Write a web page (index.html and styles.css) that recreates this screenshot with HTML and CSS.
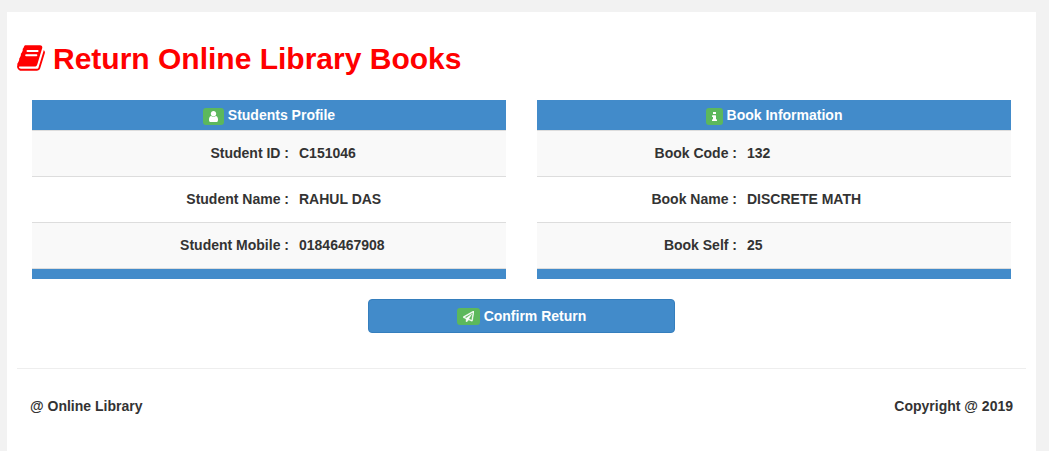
FILE: index.html
```html
<!DOCTYPE html>
<html lang="en">
<head>
<meta charset="utf-8">
<meta name="viewport" content="width=device-width, initial-scale=1">
<title>Return Online Library Books</title>
<link rel="stylesheet" href="styles.css">
</head>
<body>
<div class="page">
  <h1 class="title">
    <svg class="title-icon" viewBox="0 60 1664 1792" aria-hidden="true"><path d="M1639 478q40 57 18 129l-275 906q-19 64-76.500 107.500T1183 1664H260q-77 0-148.500-53.500T12 1479q-24-67-2-127 0-4 3-27t4-37q1-8-3-21.500t-3-19.500q2-11 8-21t16.500-23.500T52 1179q23-38 45-91.500t30-91.500q3-10 .5-30t-.5-28q3-11 17-28t17-23q21-36 42-92t25-90q1-9-2.500-32t.5-28q4-13 22-30.500t22-22.500q19-26 42.500-84.500T340 411q1-8-3-25.500t-2-26.500q2-8 9-18t18-23 17-21q8-12 16.500-30.500t15-35 16-36 19.500-32 26.500-23.500 36-11.500T556 134l-1 3q38-9 51-9h761q74 0 114 56t18 130l-274 906q-36 119-71.500 153.500T1025 1408H156q-27 0-38 15-11 16-1 43 24 70 144 70h923q29 0 56-15.500t35-41.500l300-987q7-22 5-57 38 15 59 43z"/><path class="slot" d="M620 480h610M540 730h615"/></svg>
    <span>Return Online Library Books</span>
  </h1>

  <main>
    <div class="tables">
      <table class="info student">
        <thead><tr><th colspan="2" scope="colgroup"><span class="head"><span class="badge"><svg class="icon-user" viewBox="0 0 1280 1536" preserveAspectRatio="none" aria-hidden="true"><path d="M1280 1271q0 109-62.500 187t-150.500 78H213q-88 0-150.500-78T0 1271q0-85 8.500-160.500t31.500-152 58.500-131 94-89T327 704q131 128 313 128t313-128q76 0 134.500 34.500t94 89 58.500 131 31.500 152 8.500 160.500zM1024 384q0 159-112.500 271.500T640 768 368.500 655.500 256 384t112.500-271.500T640 0t271.500 112.500T1024 384z"/></svg></span>Students Profile</span></th></tr></thead>
        <tbody>
          <tr><th scope="row">Student ID :</th><td>C151046</td></tr>
          <tr><th scope="row">Student Name :</th><td>RAHUL DAS</td></tr>
          <tr><th scope="row">Student Mobile :</th><td>01846467908</td></tr>
        </tbody>
        <tfoot><tr><td colspan="2"></td></tr></tfoot>
      </table>

      <table class="info book">
        <thead><tr><th colspan="2" scope="colgroup"><span class="head"><span class="badge"><svg class="icon-info" viewBox="0 0 640 1408" preserveAspectRatio="none" aria-hidden="true"><path d="M640 1216v128q0 26-19 45t-45 19H64q-26 0-45-19t-19-45v-128q0-26 19-45t45-19h64V768H64q-26 0-45-19t-19-45V576q0-26 19-45t45-19h384q26 0 45 19t19 45v576h64q26 0 45 19t19 45zM512 64v192q0 26-19 45t-45 19H192q-26 0-45-19t-19-45V64q0-26 19-45t45-19h256q26 0 45 19t19 45z"/></svg></span>Book Information</span></th></tr></thead>
        <tbody>
          <tr><th scope="row">Book Code :</th><td>132</td></tr>
          <tr><th scope="row">Book Name :</th><td>DISCRETE MATH</td></tr>
          <tr><th scope="row">Book Self :</th><td>25</td></tr>
        </tbody>
        <tfoot><tr><td colspan="2"></td></tr></tfoot>
      </table>
    </div>

    <button class="confirm" type="button"><span class="badge"><svg class="icon-plane" viewBox="0 0 1792 1792" aria-hidden="true"><path fill-rule="evenodd" d="M1764 11q33 24 27 64l-256 1536q-5 29-32 45-14 8-31 8-11 0-24-5l-527-215-298 327q-18 21-47 21-14 0-23-4-19-7-30-23.500t-11-36.500v-452L40 1060q-37-14-40-55-3-39 32-59L1696 10q35-21 68 1zM1422 1508l221-1323-1434 827 336 137 863-639-478 797z"/></svg></span>Confirm Return</button>
  </main>

  <footer class="footer">
    <span>@ Online Library</span>
    <span>Copyright @ 2019</span>
  </footer>
</div>
</body>
</html>
```

FILE: styles.css
```css
* {
  box-sizing: border-box;
}

body {
  min-height: 100vh;
  margin: 0;
  padding: 12px 13px 0 7px;
  display: flex;
  background: #f2f2f2;
  color: #333;
  font: bold 14px/20px "Liberation Sans", Arial, sans-serif;
}

svg {
  display: block;
  fill: currentColor;
}

.page {
  flex: 1;
  padding: 30px 10px 0;
  background: #fff;
}

.title {
  display: flex;
  align-items: center;
  gap: 8px;
  margin: 0 0 25px;
  color: #f00;
  font-size: 30px;
  line-height: 33px;
}

.title-icon {
  width: 28px;
  height: 30px;
}

.slot {
  stroke: #fff;
  stroke-width: 110;
  stroke-linecap: round;
}

.tables {
  display: grid;
  grid-template-columns: 1fr 1fr;
  gap: 31px;
  padding: 0 15px;
}

.info {
  width: 100%;
  border-collapse: separate;
  border-spacing: 0;
}

.info th,
.info td {
  padding: 0 5px;
  font-weight: bold;
}

.info thead th {
  height: 30px;
  background: #428bca;
  color: #fff;
}

.head {
  display: flex;
  align-items: center;
  justify-content: center;
  gap: 4px;
}

.badge {
  display: flex;
  align-items: center;
  height: 17px;
  padding: 0 6px;
  border-radius: 3px;
  background: #5cb85c;
  color: #fff;
}

.head .badge {
  margin-top: 2px;
}

.icon-user {
  width: 9px;
  height: 11px;
}

.icon-info {
  width: 5px;
  height: 9px;
}

.icon-plane {
  width: 11px;
  height: 11px;
  stroke: currentColor;
  stroke-width: 80;
}

.info tbody th,
.info tbody td {
  height: 46px;
  padding-bottom: 2px;
  border-top: 1px solid #ddd;
}

.info tbody tr:nth-child(odd) {
  background: #f9f9f9;
}

.info tbody th {
  text-align: right;
}

.student tbody th {
  width: 262px;
}

.book tbody th {
  width: 205px;
}

.info tfoot td {
  height: 11px;
  padding: 0;
  border-top: 1px solid #ddd;
  background: #428bca;
}

.confirm {
  display: flex;
  align-items: center;
  justify-content: center;
  gap: 4px;
  width: 100%;
  max-width: 307px;
  height: 34px;
  margin: 20px auto 35px;
  padding: 0;
  border: 1px solid #357ebd;
  border-radius: 4px;
  background: #428bca;
  color: #fff;
  font: inherit;
}

.footer {
  display: flex;
  justify-content: space-between;
  padding: 27px 13px;
  border-top: 1px solid #eee;
}
```
